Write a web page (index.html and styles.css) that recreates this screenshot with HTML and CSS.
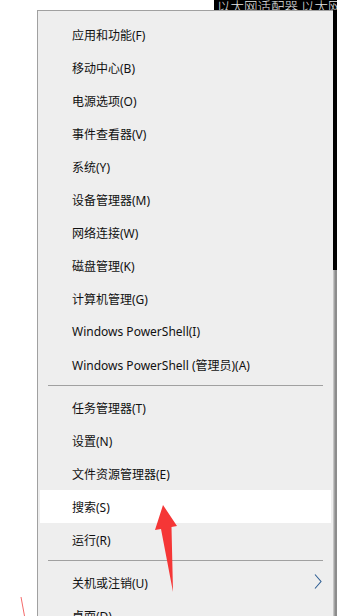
FILE: index.html
```html
<!DOCTYPE html>
<html lang="zh-CN">
<head>
<meta charset="utf-8">
<title>Win+X 菜单</title>
<link rel="stylesheet" href="styles.css">
</head>
<body>
<div class="screen">
  <div class="topbar">
    <div class="console"><span class="console-text">以太网适配器 以太网</span></div>
  </div>
  <div class="main">
    <div class="gutter"></div>
    <div class="menu">
      <div class="item">应用和功能(F)</div>
      <div class="item">移动中心(B)</div>
      <div class="item">电源选项(O)</div>
      <div class="item">事件查看器(V)</div>
      <div class="item">系统(Y)</div>
      <div class="item">设备管理器(M)</div>
      <div class="item">网络连接(W)</div>
      <div class="item">磁盘管理(K)</div>
      <div class="item">计算机管理(G)</div>
      <div class="item">Windows PowerShell(I)</div>
      <div class="item">Windows PowerShell (管理员)(A)</div>
      <div class="sep"></div>
      <div class="item">任务管理器(T)</div>
      <div class="item">设置(N)</div>
      <div class="item">文件资源管理器(E)</div>
      <div class="item hover">搜索(S)</div>
      <div class="item">运行(R)</div>
      <div class="sep"></div>
      <div class="item sub">关机或注销(U)
        <svg class="chev" width="8" height="15" viewBox="0 0 8 15"><polyline points="1,0.5 7,7.5 1,14.5" fill="none" stroke="#2f5f94" stroke-width="1.1"/></svg>
      </div>
      <div class="item">桌面(D)</div>
    </div>
    <div class="edge"></div>
  </div>
  <svg class="annot" width="337" height="616" viewBox="0 0 337 616">
    <polygon points="163,505 177,526 171.5,527 173,592 161,529 155,530" fill="#f53636"/>
    <line x1="21" y1="597" x2="24.5" y2="616" stroke="#f46a6a" stroke-width="1"/>
  </svg>
</div>
</body>
</html>
```

FILE: styles.css
```css
html, body {
  margin: 0;
  padding: 0;
  background: #ffffff;
}
body {
  width: 337px;
  height: 616px;
  overflow: hidden;
  font-family: "Noto Sans", "Noto Sans CJK SC", sans-serif;
}
.screen {
  position: relative;
  width: 337px;
  height: 616px;
  overflow: hidden;
  display: flex;
  flex-direction: column;
}
.topbar {
  height: 10px;
  display: flex;
  justify-content: flex-end;
  flex: none;
}
.console {
  width: 123px;
  height: 10px;
  background: #000;
  overflow: hidden;
  padding-left: 3px;
  box-sizing: border-box;
}
.console-text {
  display: block;
  margin-top: -1px;
  color: #e6e6e6;
  font-family: "Noto Sans CJK SC", sans-serif;
  font-weight: 300;
  font-size: 13.5px;
  line-height: 14px;
  white-space: nowrap;
}
.main {
  display: flex;
  flex: 1;
  min-height: 0;
}
.gutter {
  width: 37px;
  flex: none;
}
.menu {
  width: 296px;
  flex: none;
  box-sizing: border-box;
  background: #eeeeee;
  border-left: 1px solid #a0a0a0;
  border-top: 1px solid #a0a0a0;
  padding-top: 7px;
  display: flex;
  flex-direction: column;
}
.item {
  height: 33px;
  flex: none;
  margin: 0 2px;
  padding-left: 32px;
  padding-right: 9px;
  display: flex;
  align-items: center;
  justify-content: space-between;
  font-size: 12px;
  color: #111;
  white-space: nowrap;
}
.item.hover {
  background: #ffffff;
}
.chev {
  display: block;
  margin-top: -2px;
}
.sep {
  height: 1px;
  flex: none;
  background: #a0a0a0;
  margin: 4px 10px 5px;
}
.edge {
  width: 4px;
  flex: none;
  background:
    linear-gradient(to bottom, #000 0, #000 260px, transparent 260px),
    linear-gradient(to right, #c4c4c4 0, #c4c4c4 1px, #a3a3a3 1px, #a3a3a3 2px, #8c8c8c 2px, #8c8c8c 4px);
}
.annot {
  position: absolute;
  left: 0;
  top: 0;
  pointer-events: none;
}
```
